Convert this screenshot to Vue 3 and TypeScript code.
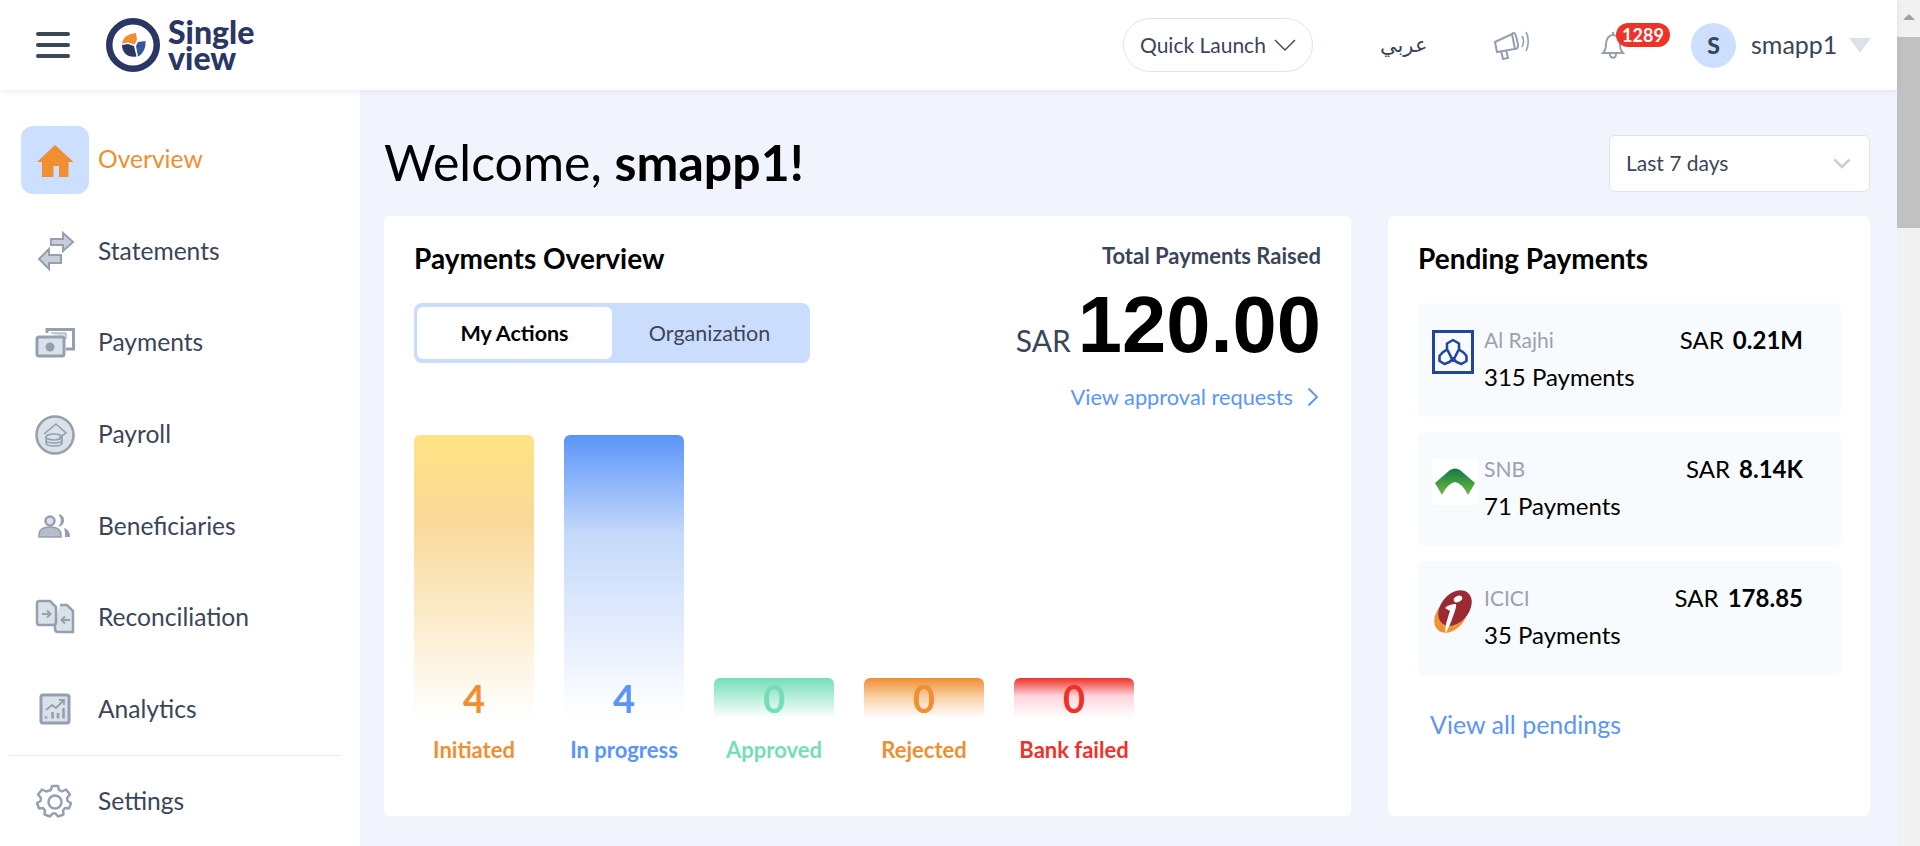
<template>
  <div class="page">
    <div class="shell">
      <header class="topbar">
        <button class="burger"><span></span><span></span><span></span></button>
        <div class="logo">
          <svg width="54" height="54" viewBox="0 0 54 54">
            <circle cx="27" cy="27" r="23.750" fill="none" stroke="#2a3663" stroke-width="6.500" />
            <path d="M16 25.500C17 20 21 16 30 15L31 22 28.500 26.500 22 24.500Z" fill="#ef8f31" />
            <path d="M16 27L22 26 28 28 30.500 38.500C22 40 16 35 16 27Z" fill="#2a3663" />
            <path d="M30 28L32 24 39.500 23C40 30 37 36 32 38.500Z" fill="#34569c" />
          </svg>
          <div class="logo-text">Single<br />view</div>
        </div>
        <div class="top-right">
          <button class="quick">
            <span class="quick-text">Quick Launch</span>
            <svg width="22" height="12" viewBox="0 0 22 12"><path d="M1 1l10 10L21 1" fill="none" stroke="#3b4559" stroke-width="1.400" /></svg>
          </button>
          <span class="lang">عربي</span>
          <svg class="mega" width="38" height="30" viewBox="0 0 38 30" fill="none" stroke="#94a0b0" stroke-width="2">
            <path d="M2 12l17-8 3 15-18 3z" fill="#fff" />
            <path d="M19 4c2-2 3-1 4 2l2 8c0 3 0 5-3 5" />
            <path d="M8 21l2 8 5-1-2-8" />
            <path d="M29 6c2 3 2 7 0 11M33 2c3 5 3 13 0 19" stroke-width="1.600" />
          </svg>
          <div class="bell">
            <svg width="24" height="28" viewBox="0 0 24 28" fill="none" stroke="#94a0b0" stroke-width="2">
              <path d="M2 22c2-2 3-4 3-9s3-9 7-9 7 4 7 9 1 7 3 9z" />
              <path d="M9 23c0 5 6 5 6 0" />
              <path d="M12 1v3" />
            </svg>
            <span class="badge">1289</span>
          </div>
          <span class="avatar">S</span>
          <span class="username">smapp1</span>
          <span class="caret"></span>
        </div>
      </header>

      <div class="body-row">
        <aside class="sidebar">
          <template v-for="item in navItems" :key="item.label">
            <div v-if="item.icon === 'settings'" class="divider"></div>
            <a class="nav-item" :class="{ active: item.active }">
              <span class="nav-icon">
                <svg width="40" height="40" viewBox="0 0 40 40" fill="none" stroke="#94a0b0" stroke-width="2">
                  <template v-if="item.icon === 'home'">
                    <path d="M20 8L38.500 25H33.500V40H24V29H18.500V40H7V25H2Z" transform="translate(0 -3)" fill="#ef8f31" stroke="none" />
                  </template>
                  <template v-else-if="item.icon === 'statements'">
                    <path d="M16 8h12V2l10 9-10 9v-6H16z" fill="#c7ced9" />
                    <path d="M26 24H14v-6L4 28l10 10v-6h12z" fill="#c7ced9" />
                  </template>
                  <template v-else-if="item.icon === 'payments'">
                    <path d="M12 10V6.500h26.500v19.500H31" stroke-width="3" fill="none" />
                    <path d="M16 10h15v6" fill="#dbe1e9" stroke-width="1" />
                    <rect x="2" y="14" width="27" height="19" rx="2" fill="#dbe1e9" stroke-width="3" />
                    <circle cx="15" cy="24" r="4.500" fill="#94a0b0" stroke="none" />
                  </template>
                  <template v-else-if="item.icon === 'payroll'">
                    <circle cx="20" cy="20" r="18.500" fill="#dbe1e9" stroke-width="2.500" />
                    <path d="M9 19l12-10 10 9-7 5" stroke-width="1.600" />
                    <ellipse cx="19" cy="22" rx="8" ry="3" stroke-width="1.600" />
                    <path d="M11 22v6c0 4 16 4 16 0v-6M11 25c0 4 16 4 16 0" stroke-width="1.600" />
                  </template>
                  <template v-else-if="item.icon === 'people'">
                    <circle cx="15" cy="15" r="4.500" fill="#dbe1e9" stroke-width="2.500" />
                    <path d="M4 29c0-6 5-8 11-8s11 2 11 8v2H4z" fill="#b5bdca" stroke="#94a0b0" stroke-width="1.500" />
                    <path d="M24 9c6-1 6 11 0 11 3-3 3-8 0-11z" fill="#94a0b0" stroke-width="1" />
                    <path d="M29 22c4 1 6 4 6 9h-5c0-4 0-6-1-9z" fill="#94a0b0" stroke="none" />
                  </template>
                  <template v-else-if="item.icon === 'recon'">
                    <path d="M20 21v10c0 2 1 3 3 3h15V13l-6-6h-7" fill="#dbe1e9" stroke-width="2.500" />
                    <path d="M4 3h11l6 6v15c0 2-1 3-3 3H4c-1 0-2-1-2-2V5c0-1 1-2 2-2z" fill="#dbe1e9" stroke-width="2.500" />
                    <path d="M7 16h8M12 12.500l3.500 3.500-3.500 3.500M35 22h-8M30 18.500L26.500 22l3.500 3.500" stroke-width="2" />
                  </template>
                  <template v-else-if="item.icon === 'analytics'">
                    <rect x="6" y="6" width="28" height="28" rx="2" fill="#dbe1e9" stroke-width="3" />
                    <path d="M11 21l6-5 4 3 8-8M24 11h5v5" stroke-width="1.800" />
                    <path d="M11 27.500v2M17.500 23v6.500M23 24v5.500M28.500 19v10.500" stroke-width="2.600" />
                  </template>
                  <template v-else>
                    <path d="M17 4h6l1 4 3 1.500 4-2 4 5-3 3.500.5 3 3.500 2-2 5.500-4-.5-2 2.500.5 4-5.500 2-2.500-3h-3l-2.500 3-5.500-2 .5-4-2-2.500-4 .5-2-5.500 3.500-2 .5-3-3-3.500 4-5 4 2L16 8z" stroke-width="2.500" stroke-linejoin="round" />
                    <circle cx="20" cy="20" r="6.500" stroke-width="2.500" />
                  </template>
                </svg>
              </span>
              <span class="nav-label">{{ item.label }}</span>
            </a>
          </template>
        </aside>

        <main class="main">
          <div class="title-row">
            <h1 class="welcome">Welcome, <b>smapp1!</b></h1>
            <div class="date-select">
              <span class="date-text">Last 7 days</span>
              <svg width="18" height="11" viewBox="0 0 18 11"><path d="M1.500 1.500L9 9l7.500-7.500" fill="none" stroke="#cbcdd0" stroke-width="2.500" /></svg>
            </div>
          </div>

          <div class="cards">
            <section class="card overview">
              <div class="overview-top">
                <div>
                  <h2 class="card-title">Payments Overview</h2>
                  <div class="toggle">
                    <span class="tab on">My Actions</span>
                    <span class="tab">Organization</span>
                  </div>
                </div>
                <div class="total">
                  <div class="total-label">Total Payments Raised</div>
                  <div class="total-value"><span class="sar">SAR</span><span class="amount">120.00</span></div>
                  <a class="approval">
                    View approval requests
                    <svg width="12" height="20" viewBox="0 0 12 20"><path d="M1.500 1.500L10 10l-8.500 8.500" fill="none" stroke="#5a95f8" stroke-width="1.800" /></svg>
                  </a>
                </div>
              </div>
              <div class="chart">
                <div v-for="bar in bars" :key="bar.label" class="col">
                  <div class="bar" :style="{ height: bar.height + 'px', background: bar.fill }">
                    <span class="bar-num" :style="{ color: bar.color }">{{ bar.value }}</span>
                  </div>
                  <span class="bar-label" :style="{ color: bar.color }">{{ bar.label }}</span>
                </div>
              </div>
            </section>

            <section class="card pending">
              <h2 class="card-title">Pending Payments</h2>
              <div class="bank-list">
                <div v-for="bank in banks" :key="bank.name" class="bank">
                  <span class="bank-logo">
                    <svg v-if="bank.name === 'Al Rajhi'" width="42" height="44" viewBox="0 0 42 44" fill="none" stroke="#20479e">
                      <rect x="1.500" y="1.500" width="39" height="41" stroke-width="3" />
                      <path d="M21 10l6 3.500v6l4.500 3 3 3.500v5l-5 3-5-2-3.500-3.500-3.500 3.500-5 2-5-3v-5l3-3.500 4.500-3v-6zM15.500 20l5.500 11 5.500-11" stroke-width="2.600" stroke-linejoin="round" />
                    </svg>
                    <svg v-else-if="bank.name === 'SNB'" width="46" height="46" viewBox="0 0 46 46">
                      <defs>
                        <linearGradient id="snbGreen" x1="0" y1="0" x2="0" y2="1">
                          <stop offset="0" stop-color="#0f7a45" />
                          <stop offset="1" stop-color="#74b843" />
                        </linearGradient>
                      </defs>
                      <rect width="46" height="46" fill="#fff" />
                      <path d="M3 24L18 11Q23 8 28 11L43 24 36 36Q30 24 23 23 16 24 10 36Z" fill="url(#snbGreen)" />
                    </svg>
                    <svg v-else width="42" height="46" viewBox="0 0 42 46">
                      <ellipse cx="19" cy="27" rx="20" ry="14" transform="rotate(-50 19 27)" fill="#ef9435" />
                      <ellipse cx="23" cy="20" rx="20" ry="14" transform="rotate(-50 23 20)" fill="#9a2b33" />
                      <ellipse cx="26" cy="11" rx="4.500" ry="3" transform="rotate(-25 26 11)" fill="#fff" />
                      <path d="M13 20c3-3 7-4 11-4 1 3-3 12-5 18l-5 11c-2-4 1-13 4-22z" fill="#fff" />
                    </svg>
                  </span>
                  <div class="bank-text">
                    <div class="bank-name">{{ bank.name }}</div>
                    <div class="bank-count">{{ bank.count }} Payments</div>
                  </div>
                  <div class="bank-amount">SAR <b>{{ bank.amount }}</b></div>
                </div>
              </div>
              <a class="all-link">View all pendings</a>
            </section>
          </div>
        </main>
      </div>
    </div>

    <div class="scrollbar">
      <span class="arrow"></span>
      <span class="thumb"></span>
    </div>
  </div>
</template>

<script setup lang="ts">
interface NavItem {
  label: string
  icon: string
  active?: boolean
}

const navItems: NavItem[] = [
  { label: 'Overview', icon: 'home', active: true },
  { label: 'Statements', icon: 'statements' },
  { label: 'Payments', icon: 'payments' },
  { label: 'Payroll', icon: 'payroll' },
  { label: 'Beneficiaries', icon: 'people' },
  { label: 'Reconciliation', icon: 'recon' },
  { label: 'Analytics', icon: 'analytics' },
  { label: 'Settings', icon: 'settings' }
]

const bars = [
  { label: 'Initiated', value: 4, height: 283, color: '#ef8f31', fill: 'linear-gradient(#fee383 0%, #f9d998 30%, #fff 100%)' },
  { label: 'In progress', value: 4, height: 283, color: '#5a95f8', fill: 'linear-gradient(#5a95f8 0%, #c5d9fb 35%, #fff 100%)' },
  { label: 'Approved', value: 0, height: 40, color: '#74deb8', fill: 'linear-gradient(#74deb8 0%, #fff 100%)' },
  { label: 'Rejected', value: 0, height: 40, color: '#ef8f31', fill: 'linear-gradient(#ef8f31 0%, #f8d3ab 50%, #fff 100%)' },
  { label: 'Bank failed', value: 0, height: 40, color: '#ef3229', fill: 'linear-gradient(#ef3229 0%, #fdd5dc 45%, #fff 100%)' }
]

const banks = [
  { name: 'Al Rajhi', count: 315, amount: '0.21M' },
  { name: 'SNB', count: 71, amount: '8.14K' },
  { name: 'ICICI', count: 35, amount: '178.85' }
]
</script>

<style>
html,
body {
  margin: 0;
  overflow: hidden;
}
</style>

<style scoped>
.page {
  display: flex;
  width: 1920px;
  height: 846px;
  overflow: hidden;
  font-family: Lato, "Open Sans", sans-serif;
  color: #3b4559;
  background: #f1f4fd;
}

.shell {
  flex: 1;
  display: flex;
  flex-direction: column;
  min-width: 0;
}

.topbar {
  position: relative;
  z-index: 2;
  flex: none;
  display: flex;
  align-items: center;
  height: 90px;
  padding-left: 36px;
  background: #fff;
  box-shadow: 0 1px 6px rgba(60, 70, 100, 0.1);
}

.burger {
  display: flex;
  flex-direction: column;
  gap: 7px;
  width: 34px;
  margin: 0 36px 0 0;
  padding: 0;
  border: none;
  background: none;
}

.burger span {
  height: 4px;
  border-radius: 2px;
  background: #3b4757;
}

.logo {
  display: flex;
  align-items: center;
  gap: 8px;
}

.logo-text {
  font-family: Lato, sans-serif;
  font-size: 32px;
  font-weight: 900;
  line-height: 26px;
  color: #2a3663;
}

.top-right {
  display: flex;
  align-items: center;
  margin-left: auto;
  padding-right: 26px;
}

.quick {
  display: flex;
  align-items: center;
  justify-content: space-between;
  width: 190px;
  height: 54px;
  padding: 0 16px;
  border: 1px solid #dee3ee;
  border-radius: 27px;
  background: #fff;
  font: 400 21px Lato, sans-serif;
  color: #3b4559;
}

.quick-text {
  margin-bottom: 2px;
}

.lang {
  width: 44px;
  margin: 0 69px 0 67px;
  font: 400 21px "DejaVu Sans", sans-serif;
  color: #3b4559;
  white-space: nowrap;
}

.mega {
  margin-right: 70px;
}

.bell {
  position: relative;
  width: 24px;
  height: 28px;
  margin-right: 66px;
}

.badge {
  position: absolute;
  top: -8px;
  left: 15px;
  width: 54px;
  height: 24px;
  border-radius: 12px;
  background: #ef3229;
  color: #fff;
  font-size: 18px;
  font-weight: 700;
  line-height: 24px;
  text-align: center;
}

.avatar {
  display: flex;
  align-items: center;
  justify-content: center;
  width: 45px;
  height: 45px;
  border-radius: 50%;
  background: #cddffe;
  font-size: 23px;
  font-weight: 900;
}

.username {
  width: 98px;
  margin-left: 15px;
  font-size: 25px;
  line-height: 28px;
  margin-bottom: 2px;
}

.caret {
  width: 0;
  height: 0;
  border-top: 15px solid #dbe2ec;
  border-left: 11px solid transparent;
  border-right: 11px solid transparent;
}

.body-row {
  flex: 1;
  display: flex;
  min-height: 0;
}

.sidebar {
  flex: none;
  width: 360px;
  padding-top: 24px;
  box-sizing: border-box;
  background: #fff;
}

.nav-item {
  display: flex;
  align-items: center;
  height: 91.6px;
  padding-left: 21px;
}

.nav-icon {
  display: flex;
  align-items: center;
  justify-content: center;
  width: 68px;
  height: 68px;
  margin-right: 9px;
  border-radius: 12px;
}

.nav-item.active .nav-icon {
  background: #cddffe;
}

.nav-label {
  margin-bottom: 2px;
  font-size: 24.6px;
}

.nav-item.active .nav-label {
  color: #ef8f31;
}

.divider {
  height: 0;
  margin: 0 18px 0 9px;
  border-top: 1px solid #ececec;
}

.main {
  flex: 1;
  min-width: 0;
  padding: 45px 27px 0 24px;
  box-sizing: border-box;
}

.title-row {
  display: flex;
  align-items: center;
  justify-content: space-between;
  height: 57px;
  margin-bottom: 24px;
}

.welcome {
  margin: -4px 0 0;
  font-size: 50px;
  font-weight: 400;
  color: #000;
}

.date-select {
  display: flex;
  align-items: center;
  justify-content: space-between;
  width: 261px;
  height: 57px;
  padding: 0 18px 0 16px;
  box-sizing: border-box;
  border: 1px solid #dee3ee;
  border-radius: 6px;
  background: #fff;
  font-size: 21px;
}

.date-text {
  margin-bottom: 2px;
}

.cards {
  display: grid;
  grid-template-columns: 967px 482px;
  gap: 37px;
}

.card {
  height: 600px;
  box-sizing: border-box;
  border-radius: 6px;
  background: #fff;
}

.overview {
  padding: 25px 30px 0 30px;
}

.pending {
  padding: 25px 29px 0 30px;
}

.overview-top {
  display: flex;
  justify-content: space-between;
  height: 194px;
}

.card-title {
  margin: 0;
  font-size: 28px;
  font-weight: 700;
  line-height: 34px;
  color: #000;
}

.toggle {
  display: flex;
  width: 396px;
  height: 60px;
  margin-top: 28px;
  padding: 4px 3px;
  box-sizing: border-box;
  border-radius: 8px;
  background: #cbddfd;
}

.tab {
  display: flex;
  align-items: center;
  justify-content: center;
  flex: none;
  width: 195px;
  border-radius: 6px;
  font-size: 21.5px;
}

.tab.on {
  background: #fff;
  color: #000;
  font-weight: 700;
}

.total {
  display: flex;
  flex-direction: column;
  align-items: flex-end;
}

.total-label {
  font-size: 22px;
  font-weight: 700;
  line-height: 30px;
}

.total-value {
  display: flex;
  align-items: baseline;
  margin-top: 12px;
  line-height: 84px;
}

.sar {
  margin-right: 7px;
  font-size: 30px;
}

.amount {
  font: 700 79.5px/84px "Liberation Sans", Arial, sans-serif;
  color: #000;
}

.approval {
  display: flex;
  align-items: center;
  gap: 14px;
  margin-top: 1px;
  margin-right: 2px;
  font-size: 21.8px;
  color: #5a95f8;
}

.chart {
  display: flex;
  align-items: flex-end;
  gap: 30px;
}

.col {
  position: relative;
  width: 120px;
}

.bar {
  display: flex;
  align-items: flex-end;
  justify-content: center;
  border-radius: 6px 6px 0 0;
}

.bar-num {
  font-size: 38px;
  font-weight: 700;
  line-height: 46px;
  margin-bottom: -3px;
}

.bar-label {
  display: block;
  margin-top: 19px;
  margin-left: -10px;
  margin-right: -10px;
  font-size: 22px;
  font-weight: 700;
  line-height: 26px;
  white-space: nowrap;
  text-align: center;
}

.bank-list {
  display: flex;
  flex-direction: column;
  gap: 15px;
  margin-top: 28px;
}

.bank {
  display: flex;
  height: 114px;
  padding: 22px 38px 0 14px;
  box-sizing: border-box;
  border-radius: 6px;
  background: #f8fbfd;
}

.bank-logo {
  flex: none;
  width: 42px;
  height: 44px;
  margin: 5px 10px 0 0;
}

.bank-text {
  flex: 1;
}

.bank-name {
  font-size: 21px;
  line-height: 30px;
  color: #98a2b3;
}

.bank-count {
  margin-top: 7px;
  font-size: 24px;
  line-height: 30px;
  color: #000;
}

.bank-amount {
  font-size: 24px;
  line-height: 30px;
  color: #000;
}

.bank-amount b {
  margin-left: 3px;
}

.all-link {
  display: block;
  margin: 34px 0 0 12px;
  font-size: 25px;
  color: #5a95f8;
}

.scrollbar {
  flex: none;
  display: flex;
  flex-direction: column;
  align-items: center;
  width: 23px;
  background: #f1f1f1;
}

.arrow {
  width: 0;
  height: 0;
  margin: 14px 0 17px;
  border-bottom: 6px solid #a0a0a0;
  border-left: 6px solid transparent;
  border-right: 6px solid transparent;
}

.thumb {
  width: 100%;
  height: 191px;
  background: #c1c1c1;
}
</style>
